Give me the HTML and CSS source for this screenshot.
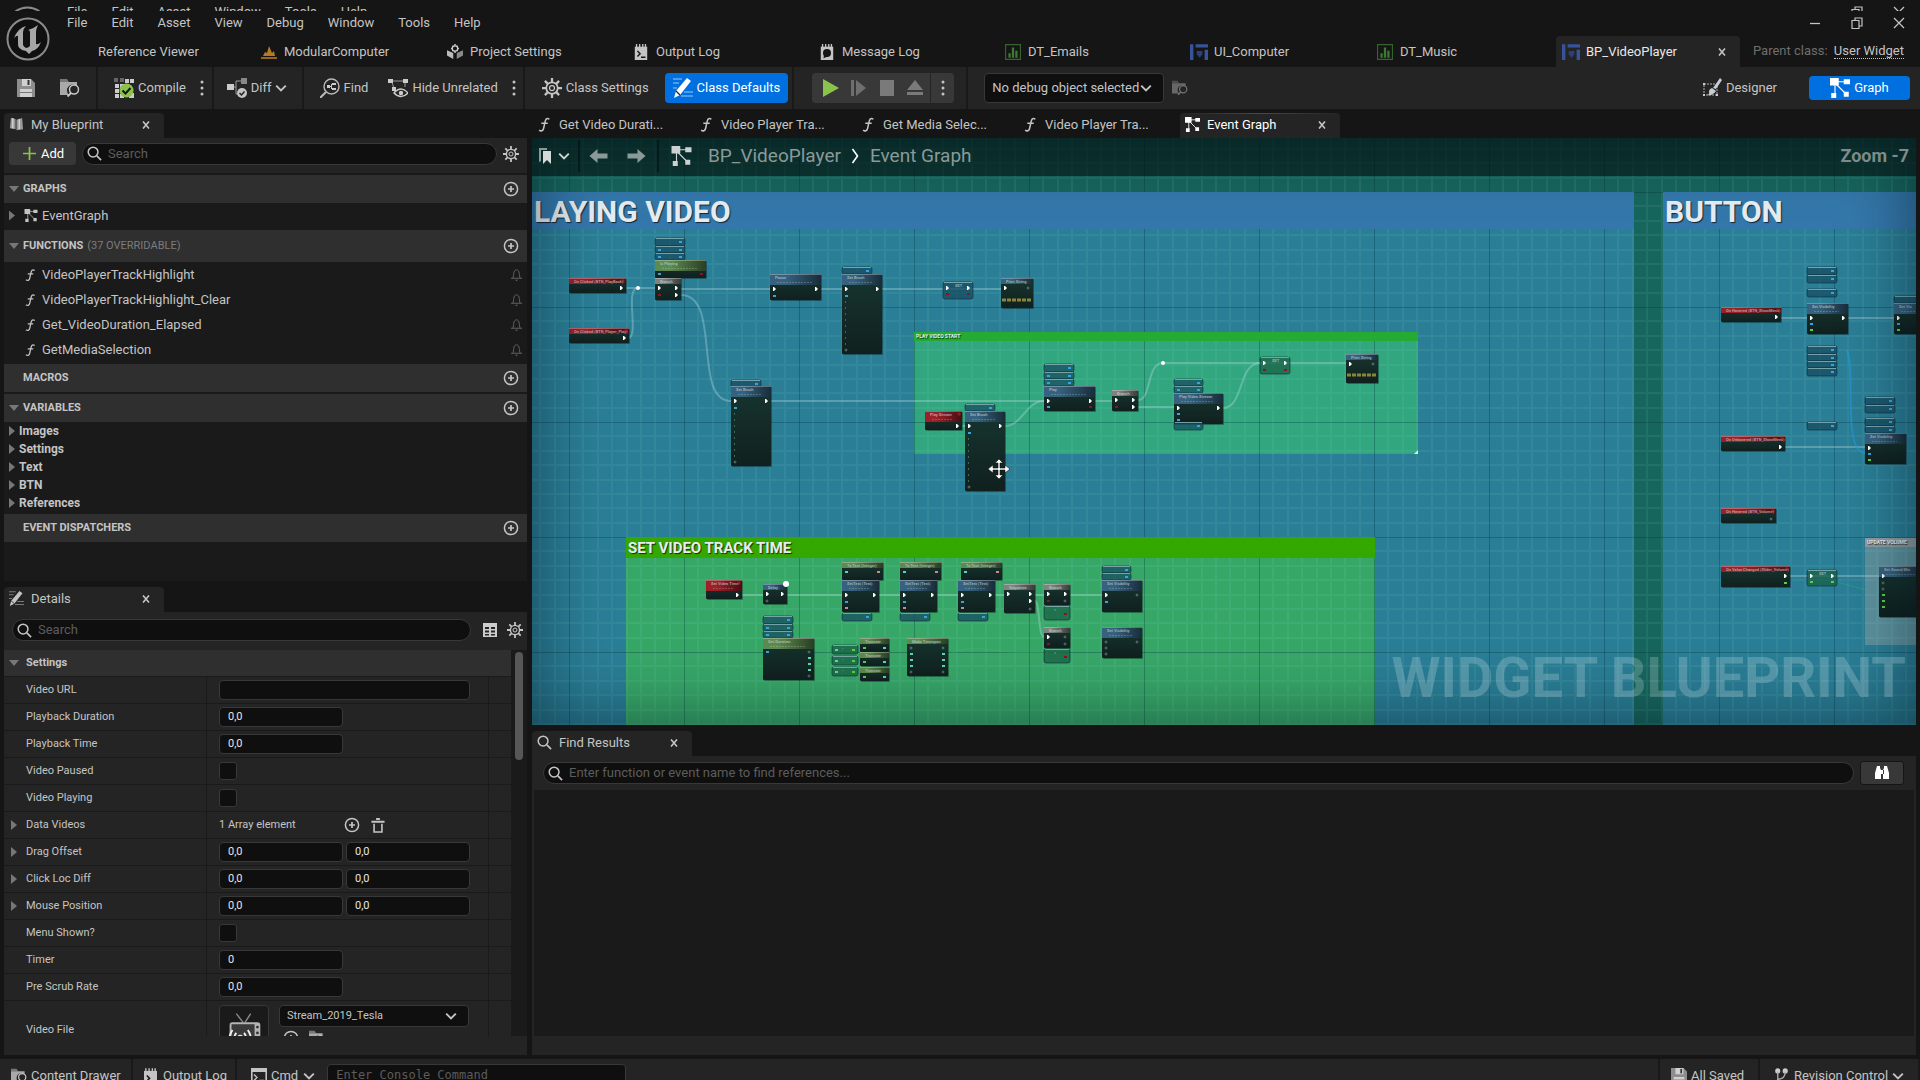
FILE: index.html
```html
<!DOCTYPE html>
<html lang="en">
<head>
    <meta charset="UTF-8">
    <meta name="viewport" content="width=device-width, initial-scale=1.0">
    <title>BP_VideoPlayer</title>
    <link rel="stylesheet" href="styles.css">
</head>
<body>

<!-- icon sprite -->
<svg class="sprite" aria-hidden="true">
    <symbol id="i-search" viewBox="0 0 16 16"><circle cx="6.5" cy="6.5" r="5.2" fill="none" stroke="currentColor" stroke-width="1.6"/><path d="M10.5 10.5l4.5 4.5" stroke="currentColor" stroke-width="1.8"/></symbol>
    <symbol id="i-gear" viewBox="0 0 16 16"><g stroke="currentColor" stroke-width="1.8"><path d="M8 0v4M8 12v4M0 8h4M12 8h4M2.3 2.3l3 3M10.7 10.7l3 3M2.3 13.7l3-3M10.7 5.3l3-3"/></g><circle cx="8" cy="8" r="4.6" fill="#242424" stroke="currentColor" stroke-width="1.4"/><circle cx="8" cy="8" r="2" fill="none" stroke="currentColor"/></symbol>
    <symbol id="i-plus" viewBox="0 0 16 16"><circle cx="8" cy="8" r="6.6" fill="none" stroke="currentColor" stroke-width="1.5"/><path d="M8 5v6M5 8h6" stroke="currentColor" stroke-width="1.7"/></symbol>
    <symbol id="i-graph" viewBox="0 0 16 16"><path d="M4 4L12 12M4 4v9M4 3h10" stroke="currentColor" stroke-width=".9"/><path d="M0 0h7v6H0zM11 1h5v4h-5zM1 12h4v4H1zM11 11h4v4h-4z" fill="currentColor"/></symbol>
    <symbol id="i-func" viewBox="0 0 12 14"><path d="M10.600 2.100C8 .3 7 2 6.400 5L5.200 10.500C4.700 13 2.800 13.600 1 12.200M3 5.800h6" fill="none" stroke="currentColor" stroke-width="1.400"/></symbol>
    <symbol id="i-bell" viewBox="0 0 14 14"><path d="M1 10.500h12M3 10.500C4.500 8 3 1.500 7 1.500S9.500 8 11 10.500" fill="none" stroke="currentColor"/><path d="M5.500 12h3l-1.500 1.600z" fill="currentColor"/></symbol>
    <symbol id="i-close" viewBox="0 0 8 8"><path d="M1 0.500l6 7M7 0.500l-6 7" stroke="currentColor" stroke-width="1.600"/></symbol>
    <symbol id="i-chev" viewBox="0 0 10 10"><path d="M1 3l4 4 4-4" fill="none" stroke="currentColor" stroke-width="1.600"/></symbol>
    <symbol id="i-dots" viewBox="0 0 4 16"><circle cx="2" cy="2" r="1.500" fill="currentColor"/><circle cx="2" cy="8" r="1.500" fill="currentColor"/><circle cx="2" cy="14" r="1.500" fill="currentColor"/></symbol>
    <symbol id="i-save" viewBox="0 0 18 18"><path d="M0 0h14l4 4v14H0z" fill="#8d8d8d"/><path d="M5 0h9v7H5zM3 10h12v8H3z" fill="#d0d0d0"/><path d="M10.500 1h2v5h-2z" fill="#333"/><path d="M3 13.500h12" stroke="#777"/></symbol>
    <symbol id="i-browse" viewBox="0 0 20 18"><path d="M0 0h7l2 3H0z" fill="#777"/><path d="M0 3h17v4A6 6 0 0 0 9 16H0z" fill="#a9a9a9"/><circle cx="14" cy="10.500" r="4.500" fill="#242424" stroke="#c8c8c8" stroke-width="1.500"/><path d="M11 14l-3.500 3.500" stroke="#c8c8c8" stroke-width="1.800"/></symbol>
    <symbol id="i-compile" viewBox="0 0 20 20"><path d="M0 0h4v4H0zM6 0h4v4H6z" fill="#666"/><path d="M11 1h4v4h-4zM16 1h4v4h-4zM1 6h4v4H1zM6 6h5v4H6zM1 11h4v4H1zM1 16h4v4H1zM15 15h5v5h-5zM6 16h4v4H6z" fill="#ccc"/><circle cx="12.500" cy="12.500" r="7" fill="#8bc24a"/><path d="M8.500 12.500l3 3 5-5.500" fill="none" stroke="#151515" stroke-width="2"/></symbol>
    <symbol id="i-diff" viewBox="0 0 20 20"><path d="M4 9h5V3h6M9 9v7h6" fill="none" stroke="#999"/><path d="M0 6h7v6H0z" fill="#ccc"/><path d="M14 0h6v6h-6z" fill="#888"/><circle cx="15" cy="15" r="5" fill="#c4c4c4"/><path d="M12.500 15l2 2 3-3.500" fill="none" stroke="#222" stroke-width="1.500"/></symbol>
    <symbol id="i-find" viewBox="0 0 20 20"><circle cx="11.500" cy="8.500" r="7.500" fill="none" stroke="#bbb" stroke-width="1.400"/><path d="M6 14l-6 6" stroke="#bbb" stroke-width="2"/><path d="M7 7h3v3H7zM12 5h4v2h-4zM12 10h4v2h-4z" fill="#ccc"/><path d="M10 8.500h1.500V6M11.500 8.500V11" fill="none" stroke="#ccc"/></symbol>
    <symbol id="i-hide" viewBox="0 0 20 20"><path d="M4 3h13M4 4l3 10M17 4v5" stroke="#999" fill="none"/><path d="M0 1h5v4H0zM15 1h5v4h-5zM4 9h4v4H4z" fill="#ccc"/><path d="M6 15q7-8 14 0q-7 7-14 0z" fill="#242424" stroke="#ccc" stroke-width="1.400"/><circle cx="13" cy="15" r="2.200" fill="#ccc"/></symbol>
    <symbol id="i-defaults" viewBox="0 0 20 20"><path d="M0 1h9M0 5h6M11 14h9M8 18h12M0 10h4" stroke="currentColor" stroke-width="1.200" opacity=".6"/><path d="M14 0l4 3L7 17l-6 3 2-7z" fill="currentColor"/><path d="M3 13l4 4" stroke="#242424" stroke-width="1.200"/></symbol>
    <symbol id="i-table" viewBox="0 0 14 14"><path d="M0 0h14v14H0z" fill="#ccc"/><path d="M2 4h4v2H2zM8 4h4v2H8zM2 7.500h4v2H2zM8 7.500h4v2H8zM2 11h4v1.500H2zM8 11h4v1.500H8z" fill="#242424"/></symbol>
    <symbol id="i-level" viewBox="0 0 18 14"><path d="M1 13h16" stroke="#c07f22" stroke-width="1.500"/><path d="M3 11L5 7l2 1 2-7 3 7 2-2 1 5z" fill="#b87a20"/></symbol>
    <symbol id="i-project" viewBox="0 0 18 18"><path d="M0 7l7 3v7l-7-4z" fill="#bbb"/><path d="M18 7l-7 3v7l7-4z" fill="#8a8a8a"/><path d="M9 0v10M4.500 5h9M6 2l6 6M12 2L6 8" stroke="#ccc" stroke-width="1.600"/><circle cx="9" cy="5" r="3" fill="#151515" stroke="#ccc" stroke-width="1.400"/></symbol>
    <symbol id="i-log" viewBox="0 0 14 18"><path d="M0 3h14v15H0z" fill="#c4c4c4"/><path d="M2 0v4M5.500 0v4M9 0v4M12 0v4" stroke="#c4c4c4" stroke-width="1.500"/><path d="M3 8l3 3-3 3M7 15h5" fill="none" stroke="#151515" stroke-width="1.600"/></symbol>
    <symbol id="i-msg" viewBox="0 0 14 18"><path d="M0 3h14v15H0z" fill="#c4c4c4"/><path d="M2 0v4M5.500 0v4M9 0v4M12 0v4" stroke="#c4c4c4" stroke-width="1.500"/><circle cx="7" cy="10" r="4.500" fill="#151515"/><path d="M3 16l1-5 4 3z" fill="#151515"/></symbol>
    <symbol id="i-data" viewBox="0 0 14 14"><path d="M.5.5h13v13H.5z" fill="none" stroke="#34632c"/><path d="M3 8h2v4H3zM6 3h2v9H6zM9 6h2v6H9z" fill="#3c7a31"/></symbol>
    <symbol id="i-widget" viewBox="0 0 16 14"><path d="M0 0h3v14H0zM5 0h11v3H5zM13 5h3v9h-3z" fill="#37549a"/><path d="M6 6h5v3l-2.500 3L6 9z" fill="#2c3f78"/></symbol>
    <symbol id="i-book" viewBox="0 0 16 16"><path d="M2 1l5 1v11l-6-1zM8 3l6-2 1 12-7 1z" fill="#9a9a9a"/><path d="M4 1v11M11 2v11" stroke="#d0d0d0" stroke-width="1.500"/></symbol>
    <symbol id="i-designer" viewBox="0 0 20 20"><path d="M2 6h13v11H2z" fill="none" stroke="#aaa" stroke-dasharray="2 1"/><path d="M1 5h2v2H1zM1 16h2v2H1zM14 16h2v2h-2z" fill="#ccc"/><path d="M18 0l2 2-6 9-3-1zM10 10l4 3q-3 5-9 4 3-1 2-3 0-3 3-4z" fill="#c5cdd4"/></symbol>
    <symbol id="i-mark" viewBox="0 0 14 16"><path d="M0 0h8v2H2v11l-2 1z" fill="#8a9a98"/><path d="M4 3h8v13l-4-4-4 4z" fill="#d5d9d8"/></symbol>
    <symbol id="i-left" viewBox="0 0 18 14"><path d="M0 7l8-7v4.500h10v5H8V14z" fill="currentColor"/></symbol>
    <symbol id="i-right" viewBox="0 0 18 14"><path d="M18 7l-8-7v4.500H0v5h10V14z" fill="currentColor"/></symbol>
    <symbol id="i-trash" viewBox="0 0 14 16"><path d="M5 0h4v2H5zM0 3h14v2H0z" fill="currentColor"/><path d="M2.800 6v9h8.400V6" fill="none" stroke="currentColor" stroke-width="1.700"/></symbol>
    <symbol id="i-cmd" viewBox="0 0 16 16"><path d="M.8.8h14.400v14.400H.8z" fill="none" stroke="#c4c4c4" stroke-width="1.600"/><path d="M0 0h16v4H0z" fill="#c4c4c4"/><path d="M3 6.500l3 3-3 3M8 12.500h5" fill="none" stroke="#c4c4c4" stroke-width="1.400"/></symbol>
    <symbol id="i-binoc" viewBox="0 0 16 16"><path d="M3 1h3v2l1 2v9H1V8zM13 1h-3v2L9 5v9h6V8zM6 5h4v4H6z" fill="#fff"/></symbol>
    <symbol id="i-branch" viewBox="0 0 14 18"><circle cx="3" cy="3" r="2.800" fill="#ccc"/><circle cx="11" cy="3" r="2.800" fill="#ccc"/><path d="M3 4v12M3 12q8 0 8-8" fill="none" stroke="#aaa" stroke-width="1.500"/><circle cx="3" cy="15" r="2.500" fill="#ccc"/></symbol>
    <symbol id="i-restore" viewBox="0 0 12 12"><path d="M1 3.500h7v8H1zM4 3V1h7v8H8.500" fill="none" stroke="currentColor" stroke-width="1.200"/></symbol>
    <symbol id="i-x" viewBox="0 0 12 12"><path d="M1 1l10 10M11 1L1 11" stroke="currentColor" stroke-width="1.300"/></symbol>
    <symbol id="i-min" viewBox="0 0 12 12"><path d="M1 6.500h10" stroke="currentColor" stroke-width="1.300"/></symbol>
    <symbol id="i-logo" viewBox="0 0 44 44">
        <circle cx="22" cy="22" r="20.500" fill="#101010" stroke="#8b8b8b" stroke-width="2"/>
        <path d="M8 21Q12 11 20 9Q17 12 17 15V28Q18 30 20 31Q22 31 24 29V15Q24 13 22 13Q27 12 32 8Q30 12 30 15V27Q32 28 35 25Q32 33 26 34L23 37L20 34Q11 33 12 25V19Q11 18 8 21z" fill="#a6a6a6"/>
    </symbol>
</svg>

<!-- sliver of the window behind -->
<div class="back-window" aria-hidden="true">
    <svg class="back-logo"><use href="#i-logo"/></svg>
    <div class="back-menu"><span>File</span><span>Edit</span><span>Asset</span><span>Window</span><span>Tools</span><span>Help</span></div>
    <div class="win-controls"><svg><use href="#i-restore"/></svg><svg><use href="#i-x"/></svg></div>
</div>

<header class="titlebar">
    <svg class="logo"><use href="#i-logo"/></svg>
    <div class="title-rows">
        <div class="menu-row">
            <nav class="menu">
                <button>File</button><button>Edit</button><button>Asset</button><button>View</button><button>Debug</button><button>Window</button><button>Tools</button><button>Help</button>
            </nav>
            <div class="win-controls">
                <button aria-label="Minimize"><svg><use href="#i-min"/></svg></button>
                <button aria-label="Restore"><svg><use href="#i-restore"/></svg></button>
                <button aria-label="Close"><svg><use href="#i-x"/></svg></button>
            </div>
        </div>
        <div class="asset-row">
            <div class="asset-tabs">
                <button class="asset-tab"><span class="tab-icon"></span>Reference Viewer</button>
                <button class="asset-tab"><svg class="tab-icon"><use href="#i-level"/></svg>ModularComputer</button>
                <button class="asset-tab"><svg class="tab-icon"><use href="#i-project"/></svg>Project Settings</button>
                <button class="asset-tab"><svg class="tab-icon"><use href="#i-log"/></svg>Output Log</button>
                <button class="asset-tab"><svg class="tab-icon"><use href="#i-msg"/></svg>Message Log</button>
                <button class="asset-tab"><svg class="tab-icon"><use href="#i-data"/></svg>DT_Emails</button>
                <button class="asset-tab"><svg class="tab-icon"><use href="#i-widget"/></svg>UI_Computer</button>
                <button class="asset-tab"><svg class="tab-icon"><use href="#i-data"/></svg>DT_Music</button>
                <button class="asset-tab active"><svg class="tab-icon"><use href="#i-widget"/></svg>BP_VideoPlayer<svg class="close"><use href="#i-close"/></svg></button>
            </div>
            <div class="parent-class">Parent class: <a href="#">User Widget</a></div>
        </div>
    </div>
</header>

<div class="toolbar">
    <div class="group g-save">
        <button aria-label="Save"><svg class="ic18"><use href="#i-save"/></svg></button>
        <button aria-label="Browse"><svg class="ic20"><use href="#i-browse"/></svg></button>
    </div>
    <div class="group g-compile">
        <button><svg class="ic20"><use href="#i-compile"/></svg>Compile</button>
        <button aria-label="Compile options"><svg class="dots"><use href="#i-dots"/></svg></button>
    </div>
    <div class="group g-diff">
        <button><svg class="ic20"><use href="#i-diff"/></svg>Diff<svg class="chev"><use href="#i-chev"/></svg></button>
    </div>
    <div class="group g-find">
        <button><svg class="ic20"><use href="#i-find"/></svg>Find</button>
        <button><svg class="ic20"><use href="#i-hide"/></svg>Hide Unrelated</button>
        <button aria-label="Hide options"><svg class="dots"><use href="#i-dots"/></svg></button>
    </div>
    <div class="group g-class">
        <button><svg class="ic20"><use href="#i-gear"/></svg>Class Settings</button>
        <button class="primary"><svg class="ic20"><use href="#i-defaults"/></svg>Class Defaults</button>
    </div>
    <div class="group g-play">
        <div class="play-box">
            <button aria-label="Play"><svg viewBox="0 0 18 20"><path d="M1 1l16 9-16 9z" fill="#8bc24a"/></svg></button>
            <button aria-label="Skip"><svg viewBox="0 0 18 20"><path d="M1 2h3v16H1zM6 2l10 8-10 8z" fill="#6f6f6f"/></svg></button>
            <button aria-label="Stop"><svg viewBox="0 0 18 20"><path d="M2 2h14v16H2z" fill="#7a7a7a"/></svg></button>
            <button aria-label="Eject"><svg viewBox="0 0 18 20"><path d="M9 2l8 10H1zM1 14h16v3H1z" fill="#7a7a7a"/></svg></button>
            <button class="more" aria-label="Play options"><svg class="dots"><use href="#i-dots"/></svg></button>
        </div>
    </div>
    <div class="group g-debug">
        <div class="select-box debug-select">
            <select aria-label="Debug object"><option>No debug object selected</option></select>
            <svg class="chev"><use href="#i-chev"/></svg>
        </div>
        <button class="dim" aria-label="Find debug object"><svg class="ic16"><use href="#i-browse"/></svg></button>
    </div>
    <div class="modes">
        <button><svg class="ic20"><use href="#i-designer"/></svg>Designer</button>
        <button class="primary graph-mode"><svg class="ic20"><use href="#i-graph"/></svg>Graph</button>
    </div>
</div>

<main class="workspace">
    <div class="left-col">
        <section class="dock blueprint">
            <div class="dock-tabs"><button class="dock-tab active"><svg><use href="#i-book"/></svg>My Blueprint<svg class="close"><use href="#i-close"/></svg></button></div>
            <div class="bp-tools">
                <button class="add"><svg viewBox="0 0 12 12"><path d="M6 0v12M0 6h12" stroke="#8bc24a" stroke-width="1.600"/></svg>Add</button>
                <label class="search"><svg><use href="#i-search"/></svg><input type="text" placeholder="Search" aria-label="Search blueprint"></label>
                <button class="icon-btn" aria-label="View options"><svg class="ic16"><use href="#i-gear"/></svg></button>
            </div>
            <div class="bp-list">
                <div class="cat"><i class="tri down"></i><b>GRAPHS</b><button aria-label="Add graph"><svg class="ic16"><use href="#i-plus"/></svg></button></div>
                <div class="item event"><i class="tri"></i><svg class="graph-ic"><use href="#i-graph"/></svg>EventGraph</div>
                <div class="cat tall"><i class="tri down"></i><b>FUNCTIONS</b><span>(37 OVERRIDABLE)</span><button aria-label="Add function"><svg class="ic16"><use href="#i-plus"/></svg></button></div>
                <div class="funcs">
                    <div class="item"><svg class="fn"><use href="#i-func"/></svg>VideoPlayerTrackHighlight<svg class="bell"><use href="#i-bell"/></svg></div>
                    <div class="item"><svg class="fn"><use href="#i-func"/></svg>VideoPlayerTrackHighlight_Clear<svg class="bell"><use href="#i-bell"/></svg></div>
                    <div class="item"><svg class="fn"><use href="#i-func"/></svg>Get_VideoDuration_Elapsed<svg class="bell"><use href="#i-bell"/></svg></div>
                    <div class="item"><svg class="fn"><use href="#i-func"/></svg>GetMediaSelection<svg class="bell"><use href="#i-bell"/></svg></div>
                </div>
                <div class="cat no-tri"><b>MACROS</b><button aria-label="Add macro"><svg class="ic16"><use href="#i-plus"/></svg></button></div>
                <div class="cat spaced"><i class="tri down"></i><b>VARIABLES</b><button aria-label="Add variable"><svg class="ic16"><use href="#i-plus"/></svg></button></div>
                <div class="vars">
                    <div><i class="tri"></i>Images</div>
                    <div><i class="tri"></i>Settings</div>
                    <div><i class="tri"></i>Text</div>
                    <div><i class="tri"></i>BTN</div>
                    <div><i class="tri"></i>References</div>
                </div>
                <div class="cat no-tri"><b>EVENT DISPATCHERS</b><button aria-label="Add dispatcher"><svg class="ic16"><use href="#i-plus"/></svg></button></div>
            </div>
        </section>

        <section class="dock details">
            <div class="dock-tabs"><button class="dock-tab active"><svg><use href="#i-defaults"/></svg>Details<svg class="close"><use href="#i-close"/></svg></button></div>
            <div class="detail-tools">
                <label class="search"><svg><use href="#i-search"/></svg><input type="text" placeholder="Search" aria-label="Search details"></label>
                <button class="icon-btn" aria-label="Property matrix"><svg class="ic14"><use href="#i-table"/></svg></button>
                <button class="icon-btn" aria-label="Details options"><svg class="ic16"><use href="#i-gear"/></svg></button>
            </div>
            <div class="detail-scroll">
                <div class="props">
                    <div class="prop-head"><i class="tri down"></i>Settings</div>
                    <div class="prop"><label for="p-url">Video URL</label><div class="val"><input class="wide" id="p-url" type="text"></div></div>
                    <div class="prop"><label for="p-dur">Playback Duration</label><div class="val"><input id="p-dur" type="text" value="0,0"></div></div>
                    <div class="prop"><label for="p-time">Playback Time</label><div class="val"><input id="p-time" type="text" value="0,0"></div></div>
                    <div class="prop"><label for="p-paused">Video Paused</label><div class="val"><input id="p-paused" type="checkbox"></div></div>
                    <div class="prop"><label for="p-playing">Video Playing</label><div class="val"><input id="p-playing" type="checkbox"></div></div>
                    <div class="prop sub"><div class="name"><i class="tri"></i>Data Videos</div><div class="val"><span class="count">1 Array element</span><button aria-label="Add element"><svg class="ic16"><use href="#i-plus"/></svg></button><button aria-label="Remove all"><svg class="trash"><use href="#i-trash"/></svg></button></div></div>
                    <div class="prop sub"><label for="p-dx"><i class="tri"></i>Drag Offset</label><div class="val"><input id="p-dx" type="text" value="0,0"><input type="text" value="0,0" aria-label="Drag Offset Y"></div></div>
                    <div class="prop sub"><label for="p-cx"><i class="tri"></i>Click Loc Diff</label><div class="val"><input id="p-cx" type="text" value="0,0"><input type="text" value="0,0" aria-label="Click Loc Diff Y"></div></div>
                    <div class="prop sub"><label for="p-mx"><i class="tri"></i>Mouse Position</label><div class="val"><input id="p-mx" type="text" value="0,0"><input type="text" value="0,0" aria-label="Mouse Position Y"></div></div>
                    <div class="prop"><label for="p-menu">Menu Shown?</label><div class="val"><input id="p-menu" type="checkbox"></div></div>
                    <div class="prop"><label for="p-timer">Timer</label><div class="val"><input id="p-timer" type="text" value="0"></div></div>
                    <div class="prop"><label for="p-scrub">Pre Scrub Rate</label><div class="val"><input id="p-scrub" type="text" value="0,0"></div></div>
                    <div class="prop file"><label for="p-file">Video File</label>
                        <div class="val">
                            <svg class="thumb" viewBox="0 0 50 50"><path d="M17 8l7 9M32 8l-6 9" stroke="#888" stroke-width="1.500"/><rect x="10" y="17" width="32" height="30" rx="3" fill="#b4b4b4"/><rect x="12" y="19" width="24" height="26" fill="#3a3a3a"/><circle cx="39" cy="22" r="1.500" fill="#333"/><circle cx="39" cy="28" r="1.500" fill="#333"/><path d="M12 43q-5-9 1-18M17 39q-4-6 0-11M30 43q5-9-1-18M25 39q4-6 0-11" fill="none" stroke="#eee" stroke-width="2"/><circle cx="21" cy="33" r="3" fill="#eee"/></svg>
                            <div class="file-pick">
                                <div class="select-box"><select id="p-file"><option>Stream_2019_Tesla</option></select><svg class="chev"><use href="#i-chev"/></svg></div>
                                <div class="file-btns"><button aria-label="Use selected"><svg class="ic16"><use href="#i-plus"/></svg></button><button aria-label="Browse to asset"><svg class="ic16"><use href="#i-browse"/></svg></button></div>
                            </div>
                        </div>
                    </div>
                </div>
                <div class="scrollbar"><div class="thumb-bar"></div></div>
            </div>
            <div class="dock-foot"></div>
        </section>
    </div>

    <div class="right-col">
        <section class="dock graph-dock">
            <div class="dock-tabs">
                <button class="dock-tab"><svg class="fn"><use href="#i-func"/></svg>Get Video Durati...</button>
                <button class="dock-tab"><svg class="fn"><use href="#i-func"/></svg>Video Player Tra...</button>
                <button class="dock-tab"><svg class="fn"><use href="#i-func"/></svg>Get Media Selec...</button>
                <button class="dock-tab"><svg class="fn"><use href="#i-func"/></svg>Video Player Tra...</button>
                <button class="dock-tab active focus"><svg><use href="#i-graph"/></svg>Event Graph<svg class="close"><use href="#i-close"/></svg></button>
            </div>
            <div class="graph">
                <svg class="canvas" id="canvas">
                    <defs>
                        <pattern id="grid" x="37" y="54" width="115" height="115" patternUnits="userSpaceOnUse">
                            <path d="M14 0v115M29 0v115M43 0v115M58 0v115M72 0v115M86 0v115M101 0v115M0 14h115M0 29h115M0 43h115M0 58h115M0 72h115M0 86h115M0 101h115" stroke="#8fe0d8" stroke-width="2" stroke-opacity=".09"/>
                            <path d="M.5 0v115M0 .5h115" stroke="#002a38" stroke-opacity=".3"/>
                        </pattern>
                        <linearGradient id="body" x1="0" y1="0" x2="0" y2="1"><stop offset="0" stop-color="#17352f"/><stop offset="1" stop-color="#10201f"/></linearGradient>
                        <linearGradient id="shade" x1="0" y1="0" x2="1" y2="0"><stop offset=".3" stop-color="#000" stop-opacity="0"/><stop offset="1" stop-color="#000" stop-opacity=".55"/></linearGradient>
                    </defs>
                </svg>
                <div class="vignette"></div>
                <div class="graph-bar">
                    <button class="mark" aria-label="Bookmarks"><svg><use href="#i-mark"/></svg><svg class="chev"><use href="#i-chev"/></svg></button>
                    <button class="nav" aria-label="Back"><svg><use href="#i-left"/></svg></button>
                    <button class="nav" aria-label="Forward"><svg><use href="#i-right"/></svg></button>
                    <div class="crumbs"><svg class="crumb-ic"><use href="#i-graph"/></svg><span>BP_VideoPlayer</span><svg class="crumb-sep" viewBox="0 0 8 16"><path d="M1 1l5 7-5 7" fill="none" stroke="#fff" stroke-width="1.600"/></svg><span>Event Graph</span></div>
                    <div class="zoom">Zoom -7</div>
                </div>
                <div class="watermark">WIDGET BLUEPRINT</div>
            </div>
        </section>

        <section class="dock find-dock">
            <div class="dock-tabs"><button class="dock-tab active"><svg><use href="#i-search"/></svg>Find Results<svg class="close"><use href="#i-close"/></svg></button></div>
            <div class="find-tools">
                <label class="search"><svg><use href="#i-search"/></svg><input type="text" placeholder="Enter function or event name to find references..." aria-label="Find references"></label>
                <button class="find-all" aria-label="Find in all blueprints"><svg class="ic16"><use href="#i-binoc"/></svg></button>
            </div>
            <div class="find-list"></div>
            <div class="dock-foot"></div>
        </section>
    </div>
</main>

<footer class="statusbar">
    <button class="drawer"><svg class="ic16"><use href="#i-browse"/></svg>Content Drawer</button>
    <button class="log"><svg class="log-ic"><use href="#i-log"/></svg>Output Log</button>
    <div class="cmd">
        <button><svg class="ic16"><use href="#i-cmd"/></svg>Cmd<svg class="chev"><use href="#i-chev"/></svg></button>
        <input type="text" placeholder="Enter Console Command" aria-label="Console command">
    </div>
    <button class="saved"><svg class="ic16"><use href="#i-save"/></svg>All Saved</button>
    <button class="revision"><svg class="log-ic"><use href="#i-branch"/></svg>Revision Control<svg class="chev"><use href="#i-chev"/></svg></button>
</footer>

<script src="graph.js"></script>
</body>
</html>
```

FILE: styles.css
```css
* {
    box-sizing: border-box;
}
body {
    margin: 0;
    height: 100vh;
    display: flex;
    flex-direction: column;
    overflow: hidden;
    background: #151515;
    color: #c4c4c4;
    font: 13px/16px Roboto, "Liberation Sans", sans-serif;
}
button, input, select {
    font: inherit;
    color: inherit;
}
button {
    display: flex;
    align-items: center;
    padding: 0;
    border: 0;
    background: none;
    white-space: nowrap;
}
svg {
    display: block;
    flex: none;
}
input::placeholder {
    color: #5c5c5c;
    opacity: 1;
}
.sprite {
    width: 0;
    height: 0;
    position: absolute;
}
.ic14 { width: 14px; height: 14px; }
.ic16 { width: 16px; height: 16px; }
.ic18 { width: 18px; height: 18px; }
.ic20 { width: 20px; height: 20px; }
.dots { width: 4px; height: 16px; }
.chev { width: 12px; height: 12px; }

/* title bar */
.back-window {
    flex: none;
    height: 11px;
    overflow: hidden;
    display: flex;
    padding: 4px 15px 0 6px;
}
.back-logo {
    width: 43px;
    height: 43px;
    margin: 2px 18px 0 0;
}
.back-menu {
    display: flex;
    gap: 24px;
    flex: 1;
}
.back-window .win-controls {
    padding-top: 2px;
}
.titlebar {
    flex: none;
    display: flex;
}
.logo {
    width: 44px;
    height: 44px;
    margin: 6px 17px 0 6px;
}
.title-rows {
    flex: 1;
    min-width: 0;
}
.menu-row {
    display: flex;
    justify-content: space-between;
    height: 24px;
    padding-right: 15px;
}
.menu {
    display: flex;
    gap: 24px;
}
.win-controls {
    display: flex;
    gap: 30px;
}
.win-controls svg {
    width: 12px;
    height: 12px;
}
.asset-row {
    display: flex;
    justify-content: space-between;
    padding: 1px 0 0 1px;
}
.asset-tabs {
    display: flex;
    gap: 2px;
    min-width: 0;
}
.asset-tab {
    width: 184px;
    height: 31px;
    padding: 0 14px 0 6px;
    border-radius: 4px 4px 0 0;
}
.asset-tab.active {
    background: #242424;
    color: #e8e8e8;
}
.tab-icon {
    width: 18px;
    height: 16px;
    margin-right: 6px;
}
.close {
    width: 8px;
    height: 8px;
    margin-left: auto;
    color: #c4c4c4;
}
.parent-class {
    padding: 7px 16px 0 0;
    color: #6e6e6e;
    white-space: nowrap;
}
.parent-class a {
    margin-left: 3px;
    color: #c4c4c4;
    text-decoration: none;
    border-bottom: 1px dotted #c4c4c4;
}

/* toolbar */
.toolbar {
    flex: none;
    display: flex;
    height: 42px;
    background: #242424;
}
.group {
    display: flex;
    align-items: center;
    border-right: 2px solid #191919;
}
.group button svg:first-child,
.modes button svg:first-child {
    margin-right: 4px;
}
.toolbar .dots {
    margin-left: 6px;
}
.g-save { padding: 0 12px 0 17px; gap: 21px; }
.g-compile { padding: 0 4px 0 16px; gap: 8px; }
.g-diff { padding: 0 15px 0 13px; }
.g-diff .chev { margin-left: 3px; }
.g-find { padding: 0 3px 0 16px; gap: 20px; }
.g-find button .dots { margin-left: -6px; }
.g-class { padding: 0 4px 0 17px; gap: 16px; }
.g-play { padding: 0 12px 0 18px; }
.g-debug { padding: 0 0 0 16px; gap: 8px; border: 0; }
.primary {
    height: 30px;
    padding: 0 8px;
    border-radius: 4px;
    background: #0070e0;
    color: #fff;
}
.play-box {
    display: flex;
    height: 30px;
    border-radius: 4px;
    background: #383838;
}
.g-play .play-box button svg {
    width: 18px;
    height: 20px;
    margin: 0 0 0 10px;
}
.g-play .play-box .more {
    margin-left: 6px;
    border-left: 1px solid #242424;
}
.g-play .play-box .more svg {
    width: 4px;
    height: 16px;
    margin: 0 9px 0 10px;
}
.dim {
    opacity: 0.5;
}
.modes {
    display: flex;
    align-items: center;
    gap: 32px;
    margin-left: auto;
    padding-right: 10px;
}
.graph-mode {
    height: 24px;
    width: 101px;
    justify-content: center;
}
.select-box {
    display: grid;
    grid-template-columns: 1fr 24px;
    align-items: center;
}
.select-box select {
    grid-area: 1 / 1 / 2 / 3;
    appearance: none;
    height: 22px;
    padding: 0 7px;
    border: 1px solid #383838;
    border-radius: 4px;
    background: #0f0f0f;
}
.select-box .chev {
    grid-area: 1 / 2;
    pointer-events: none;
}
.debug-select {
    width: 180px;
}
.debug-select select {
    height: 30px;
}

/* docked panels */
.workspace {
    flex: 1;
    min-height: 0;
    display: grid;
    grid-template-columns: 523px minmax(0, 1fr);
    gap: 5px;
    padding: 4px;
}
.left-col, .right-col {
    display: flex;
    flex-direction: column;
    gap: 6px;
    min-height: 0;
}
.dock {
    display: flex;
    flex-direction: column;
    min-height: 0;
}
.dock-tabs {
    flex: none;
    display: flex;
    gap: 2px;
}
.dock-tab {
    width: 160px;
    height: 25px;
    padding: 0 14px 2px 5px;
    border-radius: 4px 4px 0 0;
}
.dock-tab svg:first-child {
    width: 15px;
    height: 15px;
    margin-right: 7px;
}
.dock-tab.active {
    background: #242424;
}
.dock-tab.focus {
    color: #fff;
    background: linear-gradient(90deg, #242424, #0d56a8, #242424) 0 0 / 100% 1px no-repeat #242424;
}
.search {
    flex: 1;
    display: flex;
    align-items: center;
    gap: 6px;
    height: 22px;
    padding: 0 4px;
    border: 1px solid #383838;
    border-radius: 11px;
    background: #0f0f0f;
}
.search svg {
    width: 15px;
    height: 15px;
}
.search input {
    flex: 1;
    min-width: 0;
    padding: 0;
    border: 0;
    outline: 0;
    background: none;
}
.bp-tools {
    display: flex;
    align-items: center;
    gap: 6px;
    height: 35px;
    padding: 0 8px 4px 5px;
    background: #242424;
}
.add {
    gap: 5px;
    width: 67px;
    height: 23px;
    padding-left: 14px;
    border-radius: 4px;
    background: #383838;
    color: #fff;
}
.add svg {
    width: 13px;
    height: 13px;
}
.bp-list {
    border-top: 2px solid #191919;
    padding-bottom: 39px;
    background: #1a1a1a;
}
.tri {
    flex: none;
    width: 6px;
    height: 10px;
    background: #777;
    clip-path: polygon(0 0, 100% 50%, 0 100%);
}
.tri.down {
    width: 10px;
    height: 6px;
    clip-path: polygon(0 0, 100% 0, 50% 100%);
}
.cat {
    display: flex;
    align-items: center;
    gap: 4px;
    height: 28px;
    padding: 0 8px 0 5px;
    background: #2f2f2f;
    font-size: 11px;
}
.cat.tall { height: 32px; }
.cat.no-tri { padding-left: 19px; }
.cat.spaced { margin-top: 2px; }
.cat span { color: #7c7c7c; }
.cat button { margin-left: auto; }
.item {
    display: flex;
    align-items: center;
    height: 25px;
    padding: 0 4px 0 21px;
}
.item.event {
    height: 27px;
    padding: 0 4px 2px 5px;
}
.graph-ic {
    width: 14px;
    height: 13px;
    margin: 0 4px 0 9px;
}
.item .fn {
    width: 11px;
    height: 14px;
    margin-right: 6px;
}
.bell {
    width: 13px;
    height: 14px;
    margin-left: auto;
    color: #666;
}
.funcs {
    padding-bottom: 2px;
}
.vars {
    padding-bottom: 2px;
    font-size: 12px;
    font-weight: bold;
}
.vars div {
    display: flex;
    align-items: center;
    gap: 4px;
    height: 18px;
    padding-left: 5px;
}

/* details */
.details {
    flex: 1;
}
.detail-tools {
    flex: none;
    display: flex;
    align-items: center;
    gap: 10px;
    height: 38px;
    padding: 0 4px 2px 8px;
    background: #242424;
}
.detail-tools .search {
    margin-right: 2px;
}
.detail-scroll {
    flex: 1;
    display: flex;
    min-height: 0;
    overflow: hidden;
}
.props {
    flex: 1;
    font-size: 11px;
}
.prop-head {
    display: flex;
    align-items: center;
    gap: 7px;
    height: 26px;
    padding-left: 5px;
    background: #2f2f2f;
    font-weight: bold;
}
.prop {
    display: grid;
    grid-template-columns: 202px 1fr 23px;
    height: 27px;
    background: #242424;
    border-top: 1px solid #1a1a1a;
}
.prop::after {
    content: "";
    border-left: 1px solid #1a1a1a;
}
.prop label, .prop .name {
    display: flex;
    align-items: center;
    padding-left: 22px;
}
.prop.sub label, .prop.sub .name {
    gap: 9px;
    padding-left: 7px;
}
.val {
    display: flex;
    align-items: center;
    gap: 3px;
    padding-left: 12px;
    border-left: 1px solid #1a1a1a;
}
.val input[type="text"] {
    width: 124px;
    height: 20px;
    padding: 0 8px 1px;
    border: 1px solid #383838;
    border-radius: 4px;
    background: #0f0f0f;
    color: #e6e6e6;
}
.val input.wide {
    width: 251px;
}
.val input[type="checkbox"] {
    appearance: none;
    width: 18px;
    height: 18px;
    margin: 0;
    border: 1px solid #383838;
    border-radius: 3px;
    background: #0f0f0f;
}
.val .count {
    width: 122px;
}
.val button {
    margin-right: 8px;
}
.trash {
    width: 14px;
    height: 15px;
}
.prop.file {
    height: 58px;
}
.file .val {
    align-items: flex-start;
    gap: 10px;
    padding-top: 4px;
}
.thumb {
    width: 50px;
    height: 50px;
    border: 1px solid #383838;
    border-radius: 4px;
    background: #1a1a1a;
}
.file-pick {
    width: 190px;
}
.file-btns {
    display: flex;
    gap: 2px;
    padding: 3px 4px;
}
.scrollbar {
    width: 16px;
    padding: 2px 4px;
    background: #1a1a1a;
}
.thumb-bar {
    height: 108px;
    border-radius: 4px;
    background: #575757;
}
.dock-foot {
    flex: none;
    height: 19px;
    background: #242424;
}

/* graph */
.graph-dock {
    flex: 1;
}
.graph {
    position: relative;
    flex: 1;
    min-height: 0;
    overflow: hidden;
    background: #17665e;
}
.canvas {
    position: absolute;
    width: 100%;
    height: 100%;
}
.vignette {
    position: absolute;
    inset: 0;
    box-shadow: inset 0 0 70px rgba(0, 15, 25, 0.55);
}
.graph-bar {
    position: relative;
    display: flex;
    align-items: center;
    height: 38px;
    padding: 0 7px 2px;
    background: rgba(4, 16, 16, 0.6);
    color: #8a9a99;
}
.mark {
    gap: 5px;
    padding-right: 8px;
    height: 32px;
    border-right: 2px solid rgba(0, 0, 0, 0.4);
    color: #d0d4d4;
}
.mark svg:first-child {
    width: 14px;
    height: 16px;
}
.nav {
    margin-left: 9px;
}
.nav + .nav {
    margin-left: 19px;
}
.nav svg {
    width: 19px;
    height: 14px;
}
.crumbs {
    display: flex;
    align-items: center;
    margin-left: 11px;
    padding-left: 12px;
    border-left: 2px solid rgba(0, 0, 0, 0.4);
    font-size: 19px;
    line-height: 32px;
}
.crumb-ic {
    width: 21px;
    height: 20px;
    margin-right: 16px;
    color: #ccd2d1;
}
.crumb-sep {
    width: 9px;
    height: 16px;
    margin: 0 10px;
}
.zoom {
    margin-left: auto;
    font-size: 18px;
    font-weight: bold;
    color: #7d8b8a;
}
.watermark {
    position: absolute;
    right: 10px;
    bottom: 15px;
    font-size: 56px;
    line-height: 64px;
    font-weight: bold;
    white-space: nowrap;
    color: rgba(255, 255, 255, 0.2);
}
.comment-title {
    font-weight: bold;
    fill: #e6edf2;
    text-shadow: 1px 1px 1px rgba(0, 0, 0, 0.7);
}
.node-title {
    font-size: 4px;
    font-weight: bold;
    fill: #c8d0d0;
    fill-opacity: 0.7;
}
.wire {
    fill: none;
    stroke: #c4e4e8;
    stroke-opacity: 0.32;
    stroke-width: 2;
}
.wire.blue { stroke: #1ea0e8; stroke-opacity: 0.5; }
.wire.green { stroke: #40c860; stroke-opacity: 0.3; stroke-width: 1; }

/* find results */
.find-tools {
    display: flex;
    align-items: center;
    gap: 6px;
    height: 34px;
    padding: 0 12px 0 11px;
    background: #242424;
}
.find-all {
    justify-content: center;
    width: 44px;
    height: 24px;
    border: 1px solid #151515;
    border-radius: 3px;
    background: #383838;
}
.find-list {
    height: 246px;
    border: 2px solid #242424;
    border-width: 0 2px;
    background: #1a1a1a;
}

/* status bar, its lower part runs off the window */
.statusbar {
    flex: none;
    display: flex;
    align-items: flex-start;
    height: 21px;
    overflow: hidden;
    background: #242424;
}
.statusbar > * {
    height: 34px;
    border-right: 2px solid #191919;
}
.statusbar .ic16 {
    margin-right: 4px;
}
.log-ic {
    width: 13px;
    height: 17px;
    margin-right: 6px;
}
.drawer { width: 133px; padding-left: 11px; }
.log { width: 104px; padding-left: 11px; }
.cmd {
    flex: 1;
    display: flex;
    align-items: flex-start;
    gap: 12px;
    padding-left: 14px;
}
.cmd button { height: 34px; }
.cmd .chev { margin-left: 5px; }
.cmd input {
    width: 299px;
    height: 22px;
    margin-top: 5px;
    padding: 0 8px;
    border: 1px solid #383838;
    border-radius: 4px;
    background: #0f0f0f;
    font: 12px "DejaVu Sans Mono", monospace;
}
.saved { width: 100px; padding-left: 11px; }
.revision { width: 160px; padding-left: 15px; }
.revision .chev { margin-left: 4px; }
```

FILE: graph.js
```javascript
const NS = 'http://www.w3.org/2000/svg';
const canvas = document.getElementById('canvas');

// canvas is panned so that nodes keep their window coordinates
const PAN_X = 532;
const PAN_Y = 138;

const heads = {
    event: '#9c2028',
    func: '#36627f',
    pure: '#5c8a50',
    macro: '#7d8480'
};
const pinColors = { b: '#35a5e0', g: '#5ad040', r: '#8a1420', t: '#58d8b0', p: '#d08888', d: '#3c6a58' };

// x, y, w, h, title height, font size, text, title colour, body colour
const comments = [
    [532, 192, 1102, 534, 37, 30, 'LAYING VIDEO', '#3478ab', '#2a7e96'],
    [1663, 192, 260, 534, 37, 30, 'BUTTON', '#3478ab', '#2a7e96'],
    [914, 332, 504, 122, 9, 5, 'PLAY VIDEO START', '#25ab33', '#31a67f'],
    [626, 537, 749, 190, 21, 15, 'SET VIDEO TRACK TIME', '#35a800', '#37a768'],
    [1865, 538, 60, 107, 9, 5, 'UPDATE VOLUME', '#8f9ea2', '#5c929e']
];

// pins: side, kind, y offset
const brushPins = 'lx15 rx15 lb22 ld28 ld34 ld40 ld46 ld52 ld58 ld64 ld70 lh76';
const nodes = [
    ['event', 569, 278, 57, 15, 'On Clicked (BTN_PlayBack)', 'rx10'],
    ['event', 569, 328, 60, 15, 'On Clicked (BTN_Player_Play)', 'rx10'],
    ['var', 655, 238, 30, 8, '', 'rb4'],
    ['var', 655, 246, 30, 7, '', 'lb4 rb4'],
    ['var', 655, 253, 30, 7, '', 'lb4 rb4'],
    ['pure', 655, 260, 51, 18, 'Is Playing', 'lb14 rr14'],
    ['macro', 655, 278, 26, 22, 'Branch', 'lx10 rx10 rx17 lr17'],
    ['func', 770, 274, 51, 26, 'Pause', 'lx15 rx15 lb22'],
    ['var', 842, 267, 30, 7, '', 'rb4'],
    ['func', 842, 274, 40, 80, 'Set Brush', brushPins],
    ['set', 943, 282, 30, 17, 'SET', 'lx6 rx6 lr12 rr12'],
    ['print', 1001, 278, 32, 30, 'Print String', 'lx10 rh10'],
    ['var', 731, 380, 30, 7, '', 'rb4'],
    ['func', 731, 386, 40, 80, 'Set Brush', brushPins],
    ['event', 925, 411, 37, 19, 'Play Stream', 'rx15'],
    ['var', 965, 404, 30, 7, '', 'rb4'],
    ['func', 965, 411, 40, 80, 'Set Brush', brushPins],
    ['var', 1044, 364, 30, 8, '', 'rb4'],
    ['var', 1044, 372, 30, 7, '', 'lb4 rb4'],
    ['var', 1044, 379, 30, 7, '', 'lb4 rb4'],
    ['func', 1044, 386, 51, 25, 'Play', 'lx15 rx15 lb21 rr21'],
    ['macro', 1112, 390, 26, 21, 'Branch', 'lx10 rx10 rx17 lr17'],
    ['var', 1174, 379, 29, 7, '', 'rb4'],
    ['var', 1174, 386, 29, 7, '', 'lb4 rb4'],
    ['func', 1174, 393, 49, 31, 'Play Video Stream', 'lx15 rx15 lb21 lb27'],
    ['var', 1174, 422, 29, 8, '', 'rb4'],
    ['setgreen', 1260, 357, 30, 17, 'SET', 'lx6 rx6 lr13 rr13'],
    ['print', 1346, 354, 32, 29, 'Print String', 'lx10 rh10'],

    ['event', 706, 580, 36, 19, 'Set Video Time', 'rx15'],
    ['func', 763, 584, 24, 20, 'Delay', 'lx10 rx10 lh17'],
    ['pure', 842, 562, 41, 18, 'To Text (Integer)', 'lt10 rp10'],
    ['func', 842, 580, 37, 32, 'SetText (Text)', 'lx15 rx15 lb22 lp28'],
    ['var', 842, 613, 30, 8, '', 'rb4'],
    ['pure', 900, 562, 41, 18, 'To Text (Integer)', 'lt10 rp10'],
    ['func', 900, 580, 37, 32, 'SetText (Text)', 'lx15 rx15 lb22 lp28'],
    ['var', 900, 613, 30, 8, '', 'rb4'],
    ['pure', 961, 562, 41, 18, 'To Text (Integer)', 'lt10 rp10'],
    ['func', 958, 580, 37, 32, 'SetText (Text)', 'lx15 rx15 lb22 lp28'],
    ['var', 958, 613, 30, 8, '', 'rb4'],
    ['macro', 1004, 584, 31, 29, 'Sequence', 'lx10 rx10 rx17 rh25'],
    ['macro', 1044, 584, 26, 21, 'Branch', 'lx10 rx10 rh17 lr17'],
    ['setgreen', 1044, 606, 26, 14, '<', 'ld4 ld10 rr8'],
    ['macro', 1044, 627, 26, 21, 'Branch', 'lx10 rh10 rh17 lr17'],
    ['setgreen', 1044, 649, 26, 14, '<', 'ld4 ld10 rr8'],
    ['var', 1102, 566, 29, 7, '', 'rb4'],
    ['var', 1102, 573, 29, 7, '', 'rb4'],
    ['func', 1102, 580, 40, 32, 'Set Visibility', 'lx15 rh15 lb22'],
    ['func', 1102, 627, 40, 31, 'Set Visibility', 'lh15 rh15 lh21 lh27'],
    ['var', 763, 616, 30, 8, '', 'rb4'],
    ['var', 763, 624, 30, 7, '', 'lb4 rb4'],
    ['var', 763, 631, 30, 7, '', 'lb4 rb4'],
    ['pure', 763, 638, 51, 42, 'Get Duration', 'lb14 rh14 rt20 rt26 rt32 rh38'],
    ['setgreen', 832, 645, 26, 9, '-', 'lt5 rg5'],
    ['setgreen', 832, 656, 26, 9, '-', 'lt5 rg5'],
    ['setgreen', 832, 667, 26, 9, '-', 'lt5 rg5'],
    ['pure', 860, 638, 29, 14, 'Truncate', 'lg10 rt10'],
    ['pure', 860, 652, 29, 14, 'Truncate', 'lg10 rt10'],
    ['pure', 860, 667, 29, 14, 'Truncate', 'lg10 rt10'],
    ['pure', 907, 638, 41, 38, 'Make Timespan', 'lh10 rh10 lt16 rt16 lt22 rt22 lt28 rt28 lh34 rh34'],

    ['var', 1807, 267, 30, 8, '', 'rb4'],
    ['var', 1807, 275, 30, 8, '', 'rb4'],
    ['var', 1807, 289, 30, 8, '', 'rb4'],
    ['event', 1721, 307, 60, 15, 'On Hovered (BTN_ShowMenu)', 'rx10'],
    ['func', 1807, 303, 41, 31, 'Set Visibility', 'lx15 rx15 lb21 lg27'],
    ['var', 1894, 296, 30, 7, '', ''],
    ['func', 1894, 303, 40, 31, 'Set Vis', 'lx15 lb21 lg27'],
    ['var', 1807, 346, 30, 8, '', 'rb4'],
    ['var', 1807, 354, 30, 7, '', 'rb4'],
    ['var', 1807, 361, 30, 7, '', 'rb4'],
    ['var', 1807, 368, 30, 8, '', 'rb4'],
    ['var', 1807, 422, 30, 8, '', 'rb4'],
    ['var', 1865, 397, 30, 8, '', 'rb4'],
    ['var', 1865, 405, 30, 8, '', 'rb4'],
    ['var', 1865, 418, 30, 8, '', 'rb4'],
    ['var', 1865, 426, 30, 7, '', 'rb4'],
    ['event', 1721, 436, 64, 15, 'On Unhovered (BTN_ShowMenu)', 'rx11'],
    ['func', 1865, 433, 41, 31, 'Set Visibility', 'lx15 lb21 lg27'],
    ['event', 1721, 508, 55, 15, 'On Hovered (BTN_Volume)', 'rh11'],
    ['event', 1721, 566, 69, 21, 'On Value Changed (Slider_Volume)', 'rx10 rg17'],
    ['setgreen', 1807, 570, 30, 16, 'SET', 'lx6 rx6 lg12 rg12'],
    ['func', 1879, 566, 45, 51, 'Set Sound Mix', 'lx10 lh17 lh23 lg29 lg35 lg41']
];

const wires = [
    ['M626 288H655'],
    ['M628 338C640 338 624 288 638 288'],
    ['M681 289H770'],
    ['M681 295C722 295 692 401 731 401'],
    ['M821 289H842'],
    ['M882 289H1001'],
    ['M771 401H1044'],
    ['M1005 426C1022 426 1026 401 1044 401'],
    ['M962 426H965'],
    ['M1095 401H1112'],
    ['M1138 400C1152 400 1146 363 1163 363H1346'],
    ['M1138 407H1174'],
    ['M1223 408C1244 408 1238 363 1260 363'],
    ['M742 595H1102'],
    ['M1035 601C1040 601 1038 637 1044 637'],
    ['M1781 318H1894'],
    ['M1785 447H1865'],
    ['M1790 576H1879'],
    ['M1847 350C1856 370 1842 452 1865 453', 'blue'],
    ['M1837 582L1866 590', 'green'],
    ['M948 655C980 640 990 656 1044 652', 'green']
];

function add(parent, name, attrs, text) {
    const el = document.createElementNS(NS, name);
    for (const key in attrs) el.setAttribute(key, attrs[key]);
    if (text) el.textContent = text;
    parent.appendChild(el);
    return el;
}

function drawCommentTitle(parent, [x, y, w, h, titleH, size, text, titleFill]) {
    add(parent, 'rect', { x, y, width: w, height: titleH, fill: titleFill });
    const baseline = y + Math.round(titleH / 2 + size * 0.38);
    add(parent, 'text', { x: x + 2, y: baseline, 'font-size': size, class: 'comment-title' }, text);
}

function drawPin(parent, x, y, kind) {
    if (kind === 'x') {
        add(parent, 'path', { d: `M${x - 1} ${y - 2}h1l2 2-2 2h-1z`, fill: '#fff' });
    } else if (kind === 'h') {
        add(parent, 'circle', { cx: x, cy: y, r: 1, fill: 'none', stroke: '#9ab0ac', 'stroke-width': 0.5 });
    } else {
        add(parent, 'rect', { x: x - 1, y: y - 1, width: kind === 'd' ? 1 : 3, height: 2, fill: pinColors[kind] });
    }
}

function drawNode(parent, [type, x, y, w, h, title, pins]) {
    const g = add(parent, 'g', {});
    const small = type === 'var' || type.startsWith('set');
    if (small) {
        const fill = type === 'setgreen' ? '#1a6044' : '#174c60';
        add(g, 'rect', { x, y, width: w, height: h, rx: 2, fill, 'fill-opacity': 0.75, stroke: '#0c2c36', 'stroke-width': 1, 'stroke-opacity': 0.6 });
        add(g, 'path', { d: `M${x + 1} ${y}.5h${w - 2}`, stroke: '#a0c8cc', 'stroke-opacity': 0.7 });
        if (title) add(g, 'text', { x: x + w / 2 - 3, y: y + Math.min(h - 3, 5), class: 'node-title' }, title);
    } else {
        const tall = type === 'func' && h > 20 || h === 19 || title === 'Is Playing' || title === 'Get Duration';
        const headH = tall ? 11 : 6;
        add(g, 'rect', { x: x + 1, y: y + 1, width: w, height: h, rx: 1, fill: '#000', 'fill-opacity': 0.35 });
        add(g, 'rect', { x, y, width: w, height: h, rx: 1, fill: 'url(#body)' });
        add(g, 'rect', { x, y, width: w, height: headH, fill: heads[type] || heads.func });
        add(g, 'rect', { x, y, width: w, height: headH, fill: 'url(#shade)' });
        add(g, 'path', { d: `M${x} ${y}.5h${w}`, stroke: '#fff', 'stroke-opacity': 0.3 });
        add(g, 'text', { x: x + 5, y: y + 5, class: 'node-title' }, title);
        if (tall) add(g, 'path', { d: `M${x + 7} ${y + 8}.5h${w - 16}`, stroke: '#fff', 'stroke-opacity': 0.2, 'stroke-dasharray': '2 1' });
        if (type === 'print') add(g, 'path', { d: `M${x + 1} ${y + h - 8}h${w - 2}`, stroke: '#8a8638', 'stroke-width': 3, 'stroke-dasharray': '4 1' });
        if (type === 'event') add(g, 'rect', { x: x + w - 4, y: y + 2, width: 2, height: 2, fill: 'none', stroke: '#e03038', 'stroke-width': 0.5 });
    }
    for (const pin of pins.split(' ').filter(Boolean)) {
        const px = pin[0] === 'l' ? x + 4 : x + w - 5;
        drawPin(g, px, y + Number(pin.slice(2)), pin[1]);
    }
}

// comment bodies lie under the grid, everything else over it
const pan = { transform: `translate(${-PAN_X} ${-PAN_Y})` };
const under = add(canvas, 'g', pan);
comments.forEach(([x, y, w, h, , , , , fill]) => add(under, 'rect', { x, y, width: w, height: h, fill }));
add(canvas, 'rect', { width: '100%', height: '100%', fill: 'url(#grid)' });
const over = add(canvas, 'g', pan);
comments.forEach(c => drawCommentTitle(over, c));
wires.forEach(([d, color]) => add(over, 'path', { d, class: 'wire ' + (color || '') }));
nodes.forEach(n => drawNode(over, n));

// reroute knots, delay clock, resize corner
add(over, 'circle', { cx: 638, cy: 288, r: 2, fill: '#fff' });
add(over, 'circle', { cx: 1163, cy: 363, r: 2, fill: '#fff' });
add(over, 'circle', { cx: 786, cy: 584, r: 3, fill: '#fff' });
add(over, 'path', { d: 'M1418 450v4h-4z', fill: '#d8f0e4' });

// pan cursor
add(over, 'path', {
    d: 'M999 459l4 4h-3v5h5v-3l5 4-5 4v-3h-5v5h3l-4 4-4-4h3v-5h-5v3l-5-4 5-4v3h5v-5h-3z',
    fill: '#fff', stroke: '#111', 'stroke-width': 0.6
});
```
